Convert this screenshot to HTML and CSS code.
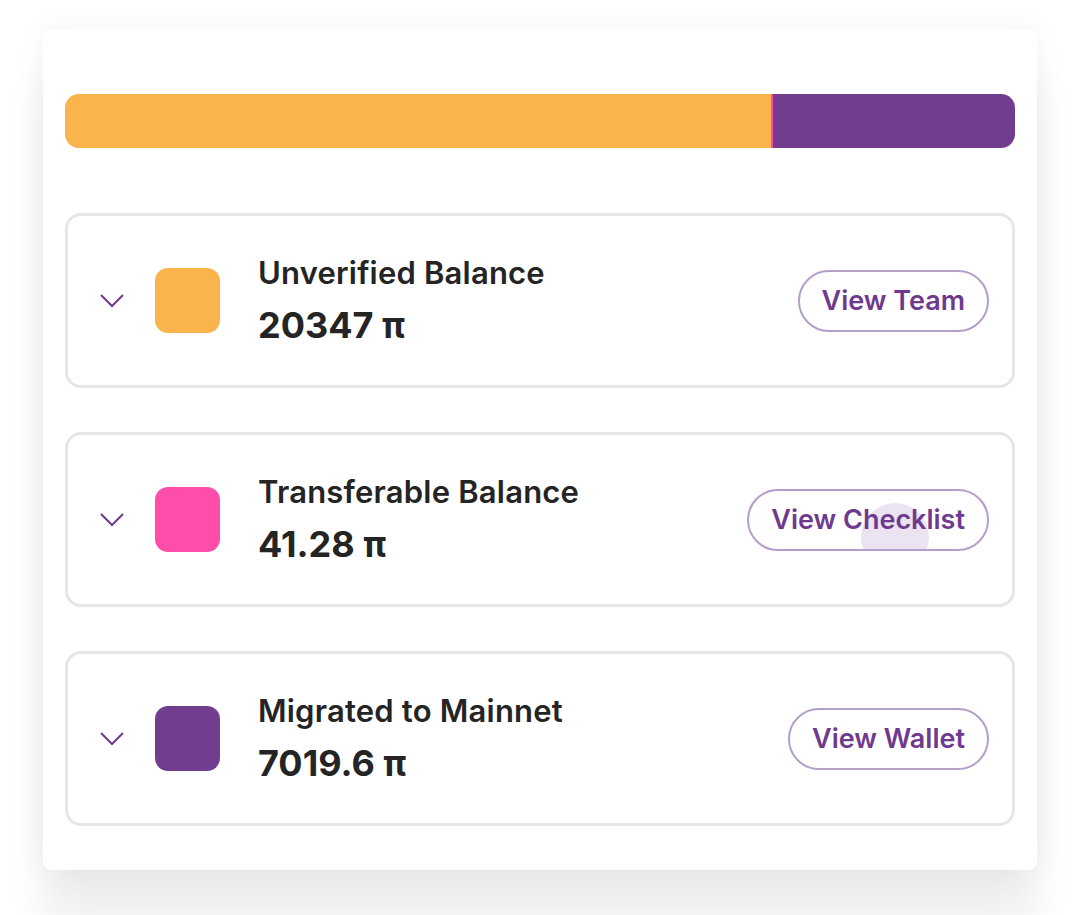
FILE: index.html
```html
<!DOCTYPE html>
<html>
<head>
    <title>Balances</title>
    <link rel="stylesheet" href="styles.css">
</head>
<body>
    <div class="panel">
        <div class="ratio-bar">
            <div class="ratio-part orange" style="width: 74.3%"></div>
            <div class="ratio-part pink" style="width: 0.2%"></div>
            <div class="ratio-part purple" style="width: 25.5%"></div>
        </div>

        <div class="balance-row">
            <svg class="chevron" viewBox="0 0 24 14" width="24" height="14">
                <path d="M1 1 L12 12 L23 1" fill="none" stroke="#6f3a8e" stroke-width="2"/>
            </svg>
            <div class="swatch orange"></div>
            <div class="balance-text">
                <div class="balance-title">Unverified Balance</div>
                <div class="balance-value">20347 π</div>
            </div>
            <button class="pill-btn">View Team</button>
        </div>

        <div class="balance-row">
            <svg class="chevron" viewBox="0 0 24 14" width="24" height="14">
                <path d="M1 1 L12 12 L23 1" fill="none" stroke="#6f3a8e" stroke-width="2"/>
            </svg>
            <div class="swatch pink"></div>
            <div class="balance-text">
                <div class="balance-title">Transferable Balance</div>
                <div class="balance-value">41.28 π</div>
            </div>
            <button class="pill-btn"><span class="ripple"></span><span class="btn-label">View Checklist</span></button>
        </div>

        <div class="balance-row">
            <svg class="chevron" viewBox="0 0 24 14" width="24" height="14">
                <path d="M1 1 L12 12 L23 1" fill="none" stroke="#6f3a8e" stroke-width="2"/>
            </svg>
            <div class="swatch purple"></div>
            <div class="balance-text">
                <div class="balance-title">Migrated to Mainnet</div>
                <div class="balance-value">7019.6 π</div>
            </div>
            <button class="pill-btn">View Wallet</button>
        </div>
    </div>
</body>
</html>
```
FILE: styles.css
```css
body {
    margin: 0;
    padding: 29px 0 60px 43px;
    background: #ffffff;
    font-family: Inter, "Noto Sans", sans-serif;
    color: #242424;
}

.panel {
    width: 994px;
    height: 841px;
    box-sizing: border-box;
    padding: 65px 22px 44px 22px;
    background: #ffffff;
    border-radius: 8px;
    box-shadow: 0 0 30px rgba(0, 0, 0, 0.05), 0 50px 40px rgba(0, 0, 0, 0.07);
    display: flex;
    flex-direction: column;
    gap: 44px;
}

.ratio-bar {
    display: flex;
    height: 54px;
    border-radius: 14px;
    overflow: hidden;
    margin-bottom: 21px;
}

.orange { background-color: #f9b44d; }
.pink { background-color: #ff4dab; }
.purple { background-color: #723d8f; }

.balance-row {
    height: 175px;
    box-sizing: border-box;
    border: 3px solid #e6e6e6;
    border-radius: 16px;
    display: flex;
    align-items: center;
    padding: 0 23px 0 32px;
}

.chevron {
    flex-shrink: 0;
    margin-right: 31px;
}

.swatch {
    width: 65px;
    height: 65px;
    border-radius: 13px;
    flex-shrink: 0;
    margin-right: 38px;
}

.balance-text {
    flex: 1;
    display: flex;
    flex-direction: column;
    gap: 13px;
}

.balance-title {
    font-size: 31px;
    font-weight: 600;
    line-height: 36px;
    letter-spacing: 0.2px;
}

.balance-value {
    font-size: 36px;
    font-weight: 700;
    line-height: 42px;
}

.pill-btn {
    position: relative;
    overflow: hidden;
    height: 62px;
    padding: 0 22px;
    border: 2px solid #b59fc9;
    border-radius: 31px;
    background: #ffffff;
    color: #6f3a8e;
    font-family: Inter, "Noto Sans", sans-serif;
    font-size: 27px;
    font-weight: 600;
}

.btn-label {
    position: relative;
}

.ripple {
    position: absolute;
    left: 112px;
    top: 12px;
    width: 68px;
    height: 68px;
    border-radius: 50%;
    background: #ebe3f1;
}
```
